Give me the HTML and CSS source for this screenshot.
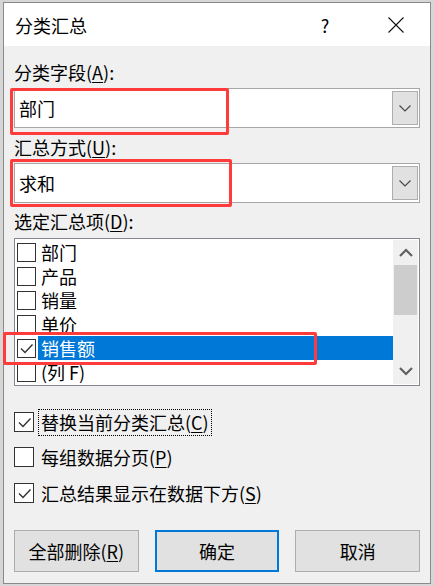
FILE: index.html
```html
<!DOCTYPE html>
<html lang="zh-CN">
<head>
<meta charset="utf-8">
<link rel="stylesheet" href="styles.css">
</head>
<body>
<div class="page">
  <div class="dialog">
    <div class="titlebar">
      <span class="title">分类汇总</span>
      <span class="help">?</span>
      <span class="close">
        <svg width="16" height="16" viewBox="0 0 16 16"><path d="M0.5 0.5 L15.5 15.5 M15.5 0.5 L0.5 15.5" stroke="#111" stroke-width="1.1" fill="none"/></svg>
      </span>
    </div>
    <div class="body">
      <div class="label l1">分类字段(<u>A</u>):</div>
      <div class="combo">
        <span class="combo-text">部门</span>
        <span class="combo-btn"><svg width="12" height="7" viewBox="0 0 12 7"><path d="M0.5 0.5 L6 6 L11.5 0.5" stroke="#444" stroke-width="1.1" fill="none"/></svg></span>
      </div>
      <div class="label l2">汇总方式(<u>U</u>):</div>
      <div class="combo">
        <span class="combo-text">求和</span>
        <span class="combo-btn"><svg width="12" height="7" viewBox="0 0 12 7"><path d="M0.5 0.5 L6 6 L11.5 0.5" stroke="#444" stroke-width="1.1" fill="none"/></svg></span>
      </div>
      <div class="label l3">选定汇总项(<u>D</u>):</div>
      <div class="listbox">
        <div class="items">
          <div class="item"><span class="box"></span><span class="itext">部门</span></div>
          <div class="item"><span class="box"></span><span class="itext">产品</span></div>
          <div class="item"><span class="box"></span><span class="itext">销量</span></div>
          <div class="item"><span class="box"></span><span class="itext">单价</span></div>
          <div class="item sel"><span class="box"><svg width="17" height="17" viewBox="0 0 17 17"><path d="M3 8.5 L7 12.5 L14.5 4.5" stroke="#333" stroke-width="1.4" fill="none"/></svg></span><span class="itext">销售额</span></div>
          <div class="item"><span class="box"></span><span class="itext">(列 F)</span></div>
        </div>
        <div class="scrollbar">
          <div class="arrow"><svg width="14" height="9" viewBox="0 0 14 9"><path d="M1 8 L7 2 L13 8" stroke="#606060" stroke-width="2.2" fill="none"/></svg></div>
          <div class="thumb"></div>
          <div class="track"></div>
          <div class="arrow"><svg width="14" height="9" viewBox="0 0 14 9"><path d="M1 1 L7 7 L13 1" stroke="#606060" stroke-width="2.2" fill="none"/></svg></div>
        </div>
      </div>
      <div class="checks">
        <div class="check c1"><span class="box"><svg width="17" height="17" viewBox="0 0 17 17"><path d="M3 8.5 L7 12.5 L14.5 4.5" stroke="#333" stroke-width="1.4" fill="none"/></svg></span><span class="ctext focus">替换当前分类汇总(<u>C</u>)</span></div>
        <div class="check c2"><span class="box"></span><span class="ctext">每组数据分页(<u>P</u>)</span></div>
        <div class="check c3"><span class="box"><svg width="17" height="17" viewBox="0 0 17 17"><path d="M3 8.5 L7 12.5 L14.5 4.5" stroke="#333" stroke-width="1.4" fill="none"/></svg></span><span class="ctext">汇总结果显示在数据下方(<u>S</u>)</span></div>
      </div>
      <div class="buttons">
        <div class="btn">全部删除(<u>R</u>)</div>
        <div class="btn default">确定</div>
        <div class="btn">取消</div>
      </div>
    </div>
    <div class="mark m1"></div>
    <div class="mark m2"></div>
    <div class="mark m3"></div>
  </div>
</div>
</body>
</html>
```
FILE: styles.css
```css
* { box-sizing: border-box; }
html, body {
  margin: 0;
  padding: 0;
  background: #d6d6d6;
}
body {
  font-family: "Noto Sans CJK SC", "Noto Sans", sans-serif;
  font-size: 18px;
  color: #000;
}
.page {
  padding: 2px 0 0 3px;
  width: 434px;
  height: 586px;
  overflow: hidden;
}
.dialog {
  position: relative;
  width: 428px;
  height: 582px;
  border: 1px solid #8a8a8a;
  background: #f0f0f0;
}
.titlebar {
  height: 43px;
  background: #fff;
  display: flex;
  align-items: center;
  padding-left: 11px;
}
.title {
  flex: 1;
  line-height: 24px;
}
.help {
  width: 20px;
  text-align: center;
  margin-right: 53px;
  font-size: 18px;
  line-height: 24px;
}
.close {
  display: flex;
  margin-right: 26px;
}
.body {
  padding: 14px 10px 0 10px;
}
.label {
  line-height: 24px;
  height: 24px;
}
.label u, .ctext u, .btn u { text-underline-offset: 2px; }
.l2 { margin-top: 7px; }
.l3 { margin-top: 6px; }
.combo {
  margin-top: 4px;
  height: 40px;
  background: #fff;
  border: 1px solid #a6a6a6;
  display: flex;
  align-items: center;
  padding: 2px 1px 2px 4px;
}
.combo-text {
  flex: 1;
  line-height: 24px;
}
.combo-btn {
  width: 26px;
  height: 34px;
  background: #e1e1e1;
  border: 1px solid #adadad;
  display: flex;
  align-items: center;
  justify-content: center;
}
.listbox {
  margin-top: 5px;
  height: 148px;
  background: #fff;
  border: 1px solid #828790;
  display: flex;
}
.items {
  flex: 1;
  padding-top: 1px;
}
.item {
  height: 24px;
  display: flex;
  align-items: center;
  padding-left: 2px;
}
.box {
  width: 19px;
  height: 19px;
  border: 1px solid #333;
  background: #fff;
  display: flex;
  align-items: center;
  justify-content: center;
  flex: none;
}
.itext {
  margin-left: 2px;
  padding-left: 3px;
  line-height: 24px;
  height: 24px;
  flex: 1;
}
.sel .itext {
  background: #0078d7;
  color: #fff;
}
.scrollbar {
  width: 25px;
  background: #f0f0f0;
  display: flex;
  flex-direction: column;
  margin: 1px 1px 1px 0;
}
.arrow {
  height: 25px;
  display: flex;
  align-items: center;
  justify-content: center;
}
.thumb {
  height: 50px;
  background: #cdcdcd;
  margin: 0 1px;
}
.track { flex: 1; }
.checks {
  margin-top: 23px;
}
.check {
  height: 26px;
  display: flex;
  align-items: center;
}
.c2 { margin-top: 9px; }
.c3 { margin-top: 10px; }
.check .box { width: 20px; height: 20px; }
.ctext {
  margin-left: 4px;
  padding: 0 2px;
  line-height: 25px;
  border: 1px solid transparent;
}
.ctext.focus {
  border: 1px dotted #000;
}
.buttons {
  margin-top: 24px;
  display: grid;
  grid-template-columns: 1fr 1fr 1fr;
  column-gap: 16px;
}
.btn {
  height: 42px;
  background: #e1e1e1;
  border: 1px solid #adadad;
  display: flex;
  align-items: center;
  justify-content: center;
}
.btn.default {
  border: 2px solid #0078d7;
}
.mark {
  position: absolute;
  border: 3px solid #ff3b3b;
  border-radius: 2px;
}
.m1 { left: 6px; top: 85px; width: 219px; height: 47px; }
.m2 { left: 6px; top: 156px; width: 222px; height: 48px; }
.m3 { left: -1px; top: 329px; width: 314px; height: 33px; }
```
